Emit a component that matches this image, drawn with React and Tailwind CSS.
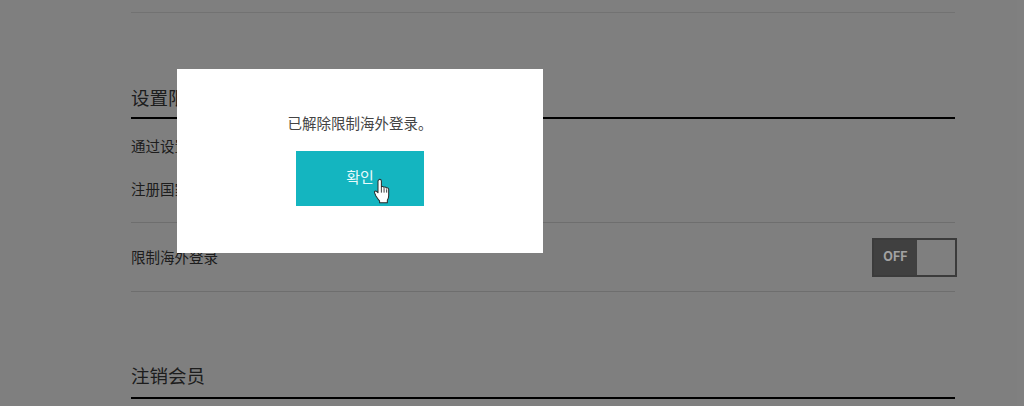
import React from "react";

const font = { fontFamily: '"Noto Sans CJK SC", "Noto Sans CJK KR", "Liberation Sans", sans-serif' };

// hand pointer shown over the confirm button
const HandCursor = () => (
  <svg className="absolute left-[77px] top-[27px]" width="19" height="27" viewBox="0 0 16 24">
    <path
      d="M4.600 1.600c.9-.9 2.400-.3 2.400 1v5.200c.5-.5 1.900-.4 2.200.5.6-.5 1.900-.3 2.200.6.7-.4 2 0 2.100 1v5.600c0 2-.4 3-1.200 4.300v2.200H5.400v-1.700c-1.300-1.200-2.300-2.900-3.400-4.600L1 13.200c-.6-1.100.7-2.200 1.700-1.400l1.300 1.300V2.700c0-.4.200-.8.600-1.100z"
      fill="#fff"
      stroke="#2a2a2a"
      strokeWidth="0.900"
      strokeLinejoin="round"
    />
    <path d="M7 8v5M9.400 9v4M11.700 10v3" stroke="#2a2a2a" strokeWidth="0.800" fill="none" />
  </svg>
);

const Dialog = () => (
  <div className="absolute inset-0 bg-black/50">
    <div className="absolute left-[177px] top-[69px] flex h-[184px] w-[366px] flex-col items-center bg-white pt-[44px]">
      <p className="text-[14.5px] leading-[20px] text-[#444]">已解除限制海外登录。</p>
      <button className="relative mt-[18px] h-[55px] w-[128px] bg-[#14b5c0] pb-[3px] text-[15px] text-[#e8fbfc]">
        확인
        <HandCursor />
      </button>
    </div>
  </div>
);

export default function App() {
  return (
    <div className="relative h-[406px] w-[1024px] overflow-hidden bg-white text-[#3a3a3a]" style={font}>
      <div className="ml-[131px] w-[824px]">
        <div className="h-[13px] border-b border-[#e4e4e4]" />

        {/* Overseas login section */}
        <h2 className="mt-[71px] h-[35px] border-b-2 border-black text-[18.500px] leading-[26px]">设置限制海外登录</h2>
        <p className="mt-[17px] text-[14.5px] leading-[20px]">通过设置限制海外登录，可以保护您的账号安全。</p>
        <p className="mt-[23px] text-[14.5px] leading-[20px]">注册国家：中国</p>

        <div className="mt-[23px] flex h-[70px] items-center justify-between border-y border-[#ddd]">
          <span className="text-[14.5px]">限制海外登录</span>
          <div className="mr-[-2px] flex h-[39px] w-[85px] border-2 border-[#777]">
            <span className="relative z-10 flex w-[43px] items-center justify-center bg-[#404040] text-[12.500px] font-bold text-[#a2a2a2]" style={{ fontFamily: '"Inter", sans-serif' }}>
              OFF
            </span>
            <span className="flex-1 bg-white" />
          </div>
        </div>

        {/* Withdraw section */}
        <h2 className="mt-[70px] h-[37px] border-b-2 border-black text-[18.500px] leading-[27px]">注销会员</h2>
      </div>
      <Dialog />
    </div>
  );
}
